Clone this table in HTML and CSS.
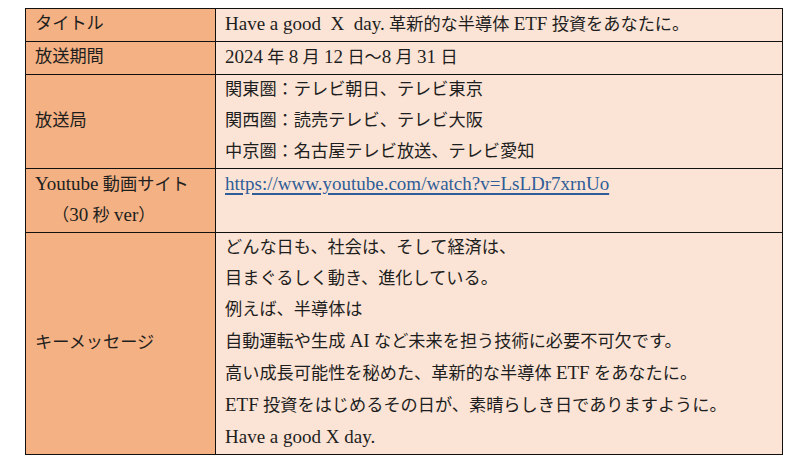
FILE: index.html
```html
<!DOCTYPE html>
<html lang="ja">
<head>
<meta charset="utf-8">
<link rel="stylesheet" href="styles.css">
</head>
<body>
<div class="page">
  <table class="info">
    <tr>
      <th>タイトル</th>
      <td class="pre"><span class="en">Have a good  X  day.</span> 革新的な半導体 <span class="en">ETF</span> 投資をあなたに。</td>
    </tr>
    <tr>
      <th>放送期間</th>
      <td><span class="en">2024</span> 年 <span class="en">8</span> 月 <span class="en">12</span> 日～<span class="en">8</span> 月 <span class="en">31</span> 日</td>
    </tr>
    <tr>
      <th class="mid">放送局</th>
      <td>関東圏：テレビ朝日、テレビ東京<br>関西圏：読売テレビ、テレビ大阪<br>中京圏：名古屋テレビ放送、テレビ愛知</td>
    </tr>
    <tr>
      <th><span class="en">Youtube</span> 動画サイト<br><span class="indent">（<span class="en">30</span> 秒 <span class="en">ver</span>）</span></th>
      <td><a class="link en" href="#">https://www.youtube.com/watch?v=LsLDr7xrnUo</a></td>
    </tr>
    <tr>
      <th class="mid">キーメッセージ</th>
      <td>どんな日も、社会は、そして経済は、<br>目まぐるしく動き、進化している。<br>例えば、半導体は<br>自動運転や生成 <span class="en">AI</span> など未来を担う技術に必要不可欠です。<br>高い成長可能性を秘めた、革新的な半導体 <span class="en">ETF</span> をあなたに。<br><span class="en">ETF</span> 投資をはじめるその日が、素晴らしき日でありますように。<br><span class="en">Have a good X day.</span></td>
    </tr>
  </table>
</div>
</body>
</html>
```
FILE: styles.css
```css
html, body {
  margin: 0;
  padding: 0;
  background: #ffffff;
}
.page {
  padding: 8px 0 0 25px;
}
.info {
  border-collapse: collapse;
  width: 758px;
  font-family: "Liberation Serif", "Noto Sans CJK JP", serif;
  font-size: 17.2px;
  line-height: 30.9px;
  color: #1e1e1e;
}
.info th, .info td {
  border: 1px solid #111111;
  padding: 0 0 0 9px;
  text-align: left;
  vertical-align: top;
  font-weight: normal;
}
.info th {
  width: 180px;
  background: #f4b183;
}
.info td {
  background: #fbe4d5;
}
.info th.mid {
  vertical-align: middle;
}
.pre {
  white-space: pre;
}
.en {
  font-size: 19px;
  line-height: 30.9px;
}
.indent {
  padding-left: 17px;
}
.link {
  color: #2f5d98;
  text-decoration: underline;
  text-decoration-thickness: 2px;
  text-underline-offset: 3px;
}
```
